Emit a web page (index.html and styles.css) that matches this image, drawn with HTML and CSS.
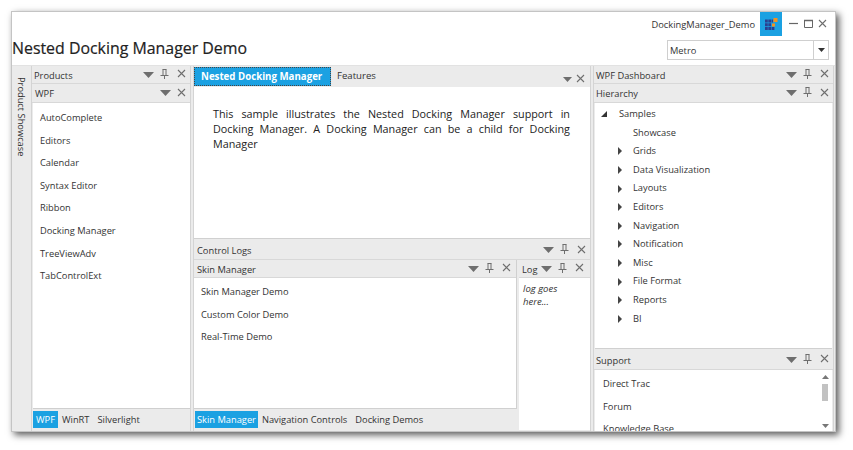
FILE: index.html
```html
<!DOCTYPE html>
<html lang="en">
<head>
<meta charset="utf-8">
<title>Nested Docking Manager Demo</title>
<link rel="stylesheet" href="styles.css">
</head>
<body>
<svg class="defs" width="0" height="0" aria-hidden="true">
  <symbol id="arrow" viewBox="0 0 11 6"><path d="M0 0h11L5.500 6z" fill="#6e6e6e"/></symbol>
  <symbol id="pin" viewBox="0 0 9 10"><path d="M2.500 .5h4M3 .5v6M6 .5v6M.5 6.500h8M4.500 6.500V10" fill="none" stroke="#6e6e6e"/></symbol>
  <symbol id="close" viewBox="0 0 9 9"><path d="M1 1l7 7M8 1L1 8" fill="none" stroke="#6e6e6e" stroke-width="1.100"/></symbol>
</svg>
<div class="window">
  <header class="top">
    <div class="titlebar">
      <span class="appname">DockingManager_Demo</span>
      <span class="logo">
        <svg width="14" height="13" viewBox="0 0 14 13"><path d="M0 1.500h2.800v3H0zM3.300 1.500h2.800v3H3.300zM6.600 1.500H8v3H6.600zM0 5.200h2.800v3H0zM3.300 5.200h2.800v3H3.300zM0 9h2.800v3H0zM3.300 9h2.800v3H3.300zM6.600 9h2.800v3H6.600z" fill="#2b3f8f"/><path d="M8.500 0h4v4h-4zM7 5.500h3v3H7z" fill="#f5921e"/></svg>
      </span>
      <span class="winbtns">
        <svg width="9" height="9" viewBox="0 0 9 9"><path d="M0 4.500h9" stroke="#666" stroke-width="1.200"/></svg>
        <svg width="9" height="9" viewBox="0 0 9 9"><path d="M.5 1.500h8v7h-8z" fill="none" stroke="#666"/><path d="M0 1.500h9" stroke="#666" stroke-width="1.500"/></svg>
        <svg width="9" height="9"><use href="#close"/></svg>
      </span>
    </div>
    <div class="titlerow">
      <h1>Nested Docking Manager Demo</h1>
      <div class="combo"><span class="combo-val">Metro</span><span class="combo-btn"><svg width="7" height="4" viewBox="0 0 7 4"><path d="M0 0h7L3.500 4z" fill="#333"/></svg></span></div>
    </div>
  </header>
  <main class="dock">
    <div class="side-strip"><span class="side-label">Product Showcase</span></div>
    <section class="col col-left">
      <div class="hdr"><span class="hdr-t">Products</span><span class="icons"><svg class="i-a"><use href="#arrow"/></svg><svg class="i-p"><use href="#pin"/></svg><svg class="i-x"><use href="#close"/></svg></span></div>
      <div class="hdr hdr-2"><span class="hdr-t">WPF</span><span class="icons"><svg class="i-a"><use href="#arrow"/></svg><svg class="i-x"><use href="#close"/></svg></span></div>
      <ul class="list list-left">
        <li>AutoComplete</li><li>Editors</li><li>Calendar</li><li>Syntax Editor</li><li>Ribbon</li><li>Docking Manager</li><li>TreeViewAdv</li><li>TabControlExt</li>
      </ul>
      <div class="tabs"><span class="tab on">WPF</span><span class="tab">WinRT</span><span class="tab">Silverlight</span></div>
    </section>
    <section class="col col-mid">
      <div class="doc-tabs">
        <span class="doc-tab on">Nested Docking Manager</span><span class="doc-tab">Features</span>
        <span class="icons"><svg class="i-a i-sm"><use href="#arrow"/></svg><svg class="i-x"><use href="#close"/></svg></span>
      </div>
      <div class="doc">
        <p>This sample illustrates the Nested Docking Manager support in Docking Manager. A Docking Manager can be a child for Docking Manager</p>
      </div>
      <div class="hdr hdr-logs"><span class="hdr-t">Control Logs</span><span class="icons"><svg class="i-a"><use href="#arrow"/></svg><svg class="i-p"><use href="#pin"/></svg><svg class="i-x"><use href="#close"/></svg></span></div>
      <div class="lower">
        <div class="skin">
          <div class="hdr"><span class="hdr-t">Skin Manager</span><span class="icons"><svg class="i-a"><use href="#arrow"/></svg><svg class="i-p"><use href="#pin"/></svg><svg class="i-x"><use href="#close"/></svg></span></div>
          <ul class="list list-skin"><li>Skin Manager Demo</li><li>Custom Color Demo</li><li>Real-Time Demo</li></ul>
        </div>
        <div class="log">
          <div class="hdr"><span class="hdr-t">Log</span><span class="icons"><svg class="i-a"><use href="#arrow"/></svg><svg class="i-p"><use href="#pin"/></svg><svg class="i-x"><use href="#close"/></svg></span></div>
          <div class="log-body">log goes here...</div>
        </div>
      </div>
      <div class="tabs tabs-mid"><span class="tab on">Skin Manager</span><span class="tab">Navigation Controls</span><span class="tab">Docking Demos</span></div>
    </section>
    <section class="col col-right">
      <div class="hdr"><span class="hdr-t">WPF Dashboard</span><span class="icons"><svg class="i-a"><use href="#arrow"/></svg><svg class="i-p"><use href="#pin"/></svg><svg class="i-x"><use href="#close"/></svg></span></div>
      <div class="hdr hdr-2"><span class="hdr-t">Hierarchy</span><span class="icons"><svg class="i-a"><use href="#arrow"/></svg><svg class="i-p"><use href="#pin"/></svg><svg class="i-x"><use href="#close"/></svg></span></div>
      <ul class="tree">
        <li class="root"><i class="tw tw-open"></i>Samples</li>
        <li><i class="tw tw-none"></i>Showcase</li>
        <li><i class="tw"></i>Grids</li>
        <li><i class="tw"></i>Data Visualization</li>
        <li><i class="tw"></i>Layouts</li>
        <li><i class="tw"></i>Editors</li>
        <li><i class="tw"></i>Navigation</li>
        <li><i class="tw"></i>Notification</li>
        <li><i class="tw"></i>Misc</li>
        <li><i class="tw"></i>File Format</li>
        <li><i class="tw"></i>Reports</li>
        <li><i class="tw"></i>BI</li>
      </ul>
      <div class="hdr hdr-support"><span class="hdr-t">Support</span><span class="icons"><svg class="i-a"><use href="#arrow"/></svg><svg class="i-p"><use href="#pin"/></svg><svg class="i-x"><use href="#close"/></svg></span></div>
      <div class="support">
        <ul class="list list-support"><li>Direct Trac</li><li>Forum</li><li>Knowledge Base</li></ul>
        <div class="scroll">
          <svg width="7" height="4" viewBox="0 0 7 4"><path d="M0 4h7L3.500 0z" fill="#777"/></svg>
          <span class="thumb"></span>
          <svg width="7" height="4" viewBox="0 0 7 4"><path d="M0 0h7L3.500 4z" fill="#777"/></svg>
        </div>
      </div>
    </section>
  </main>
</div>
</body>
</html>
```
FILE: styles.css
```css
* { box-sizing: border-box; }
html, body { margin: 0; padding: 0; background: #fff; }
body { width: 853px; height: 450px; overflow: hidden; font-family: "Open Sans", "Noto Sans", sans-serif; font-size: 9.300px; color: #333; }
.defs { display: block; height: 0; }
ul { list-style: none; margin: 0; padding: 0; }

.window {
  width: 825px; height: 421px; margin: 11px 0 0 11px;
  background: #fff; border: 1px solid #c4c4c4;
  box-shadow: 3px 3px 7px rgba(0,0,0,.65);
  display: flex; flex-direction: column;
}

.top { height: 53px; flex: none; display: flex; flex-direction: column; }
.titlebar { height: 26px; display: flex; justify-content: flex-end; align-items: flex-start; }
.appname { line-height: 25px; margin-right: 5px; color: #333; }
.logo { width: 22px; height: 24px; background: #1ba1e2; display: flex; align-items: center; justify-content: center; padding-left: 1px; }
.winbtns { display: flex; gap: 5.500px; margin: 7px 8px 0 7px; }
.titlerow { display: flex; justify-content: space-between; align-items: flex-start; }
h1 { margin: 0; font-size: 15.900px; font-weight: 400; color: #222; line-height: 20px; -webkit-text-stroke: .2px #222; }
.combo { width: 162px; height: 20px; margin: 2px 6px 0 0; border: 1px solid #cfcfcf; display: flex; background: #fff; }
.combo-val { flex: 1; line-height: 19px; padding-left: 2px; }
.combo-btn { width: 15px; border-left: 1px solid #cfcfcf; display: flex; align-items: center; justify-content: center; }

.dock { flex: 1; min-height: 0; display: flex; background: #ebebeb; border-top: 1px solid #e2e2e2; }
.side-strip { width: 19px; flex: none; padding: 11px 0 0 2px; }
.side-label { writing-mode: vertical-rl; color: #333; line-height: 14px; display: block; }
.col { display: flex; flex-direction: column; min-width: 0; }
.col-left { width: 160px; flex: none; border-left: 1px solid #d4d4d4; border-right: 1px solid #d4d4d4; margin-right: 2px; }
.col-mid { width: 398px; flex: none; margin-right: 2px; border-left: 1px solid #d4d4d4; border-right: 1px solid #d4d4d4; }
.col-right { width: 241px; flex: none; border-left: 1px solid #d4d4d4; border-right: 1px solid #d4d4d4; }

.hdr { height: 18px; flex: none; display: flex; align-items: center; justify-content: space-between; padding: 0 4px 0 2px; background: #ebebeb; border-bottom: 1px solid #d8d8d8; }
.hdr-t { line-height: 17px; color: #333; white-space: nowrap; padding-top: 1px; }
.icons { display: flex; align-items: center; gap: 6px; margin-top: -2px; }
.icons svg { display: block; }
.i-a { width: 11px; height: 6px; margin-top: 2px; }
.i-sm { width: 9px; height: 5px; }
.i-p { width: 9px; height: 10px; }
.i-x { width: 9px; height: 9px; margin-left: 2px; }
.hdr-2 { height: 19px; }
.col-left .hdr-2 { padding-left: 3px; }
.col-left .hdr-2 .icons { gap: 4px; }

.list { background: #fff; color: #333; }
.list li { height: 22.600px; line-height: 22.600px; white-space: nowrap; }
.list-left { flex: 1; min-height: 0; padding: 4px 0 0 7px; margin: 0 0 0 1px; border-bottom: 1px solid #cfcfcf; }
.tabs { height: 22px; flex: none; display: flex; align-items: flex-start; padding: 2px 0 0 1px; }
.tab { height: 17px; line-height: 17px; color: #333; white-space: nowrap; margin-left: 8px; }
.tab.on { background: #1ba1e2; color: #fff; padding: 0 3px; margin-left: 0; }
.tab.on + .tab { margin-left: 4px; }
.tabs-mid { width: 322px; }
.tabs-mid .tab.on { padding: 0 2px; }

.doc-tabs { height: 21px; flex: none; display: flex; align-items: flex-start; padding-top: 1px; background: #ebebeb; }
.doc-tab { height: 19px; line-height: 18px; padding: 0 6px; color: #333; font-size: 9.600px; }
.doc-tab.on { width: 137px; background: #1ba1e2; color: #fff; font-weight: 700; font-size: 9.700px; border: 1px dotted #444; white-space: nowrap; }
.doc-tabs .icons { margin: 7px 5px 0 auto; gap: 2px; }
.doc { height: 152px; flex: none; background: #fff; padding: 19px 20px 0 19px; border-bottom: 1px solid #d0d0d0; }
.doc p { margin: 0; font-size: 10.800px; line-height: 15px; text-align: justify; color: #222; }
.hdr-logs { height: 21px; padding: 2px 4px 0 3px; }
.lower { height: 149px; flex: none; display: flex; }
.skin { flex: 1; min-width: 0; display: flex; flex-direction: column; border-right: 1px solid #d0d0d0; }
.skin .hdr { padding: 0 5px 0 3px; }
.list-skin { flex: 1; padding: 3px 0 0 7px; border-bottom: 1px solid #d0d0d0; }
.log { width: 71px; flex: none; margin-left: 2px; display: flex; flex-direction: column; margin-bottom: -21px; z-index: 1; background: #ebebeb; }
.log .hdr { padding: 0 6px 0 3px; }
.log .icons { gap: 6px; }
.log-body { flex: 1; background: #fff; font-style: italic; padding: 4px 16px 0 4px; line-height: 13px; font-size: 9.500px; color: #333; }

.tree { height: 246px; flex: none; background: #fff; padding: 2px 0 0 4px; margin: 0 1px; border-bottom: 1px solid #d0d0d0; }
.tree li { height: 18.600px; line-height: 18.600px; display: flex; align-items: center; padding-left: 19px; color: #333; white-space: nowrap; }
.tree li.root { padding-left: 2px; }
.tw { width: 0; height: 0; margin-right: 11px; border-style: solid; border-width: 4px 0 4px 4px; border-color: transparent transparent transparent #444; }
.tw-none { border: 0; width: 5px; margin-right: 10px; }
.tw-open { border-width: 0 0 6px 6px; border-color: transparent transparent #333 transparent; margin-right: 12px; }
.hdr-support { height: 20px; padding-top: 0; margin-top: 1px; }
.support { flex: 1; min-height: 0; display: flex; overflow: hidden; background: #fff; margin: 0 1px; }
.list-support { flex: 1; padding: 3px 0 0 8px; }
.scroll { width: 14px; flex: none; display: flex; flex-direction: column; align-items: center; padding-top: 5px; }
.thumb { width: 6px; height: 17px; background: #c2c2c2; margin: 5px 0 23px; }
.scroll svg { flex: none; }
```
